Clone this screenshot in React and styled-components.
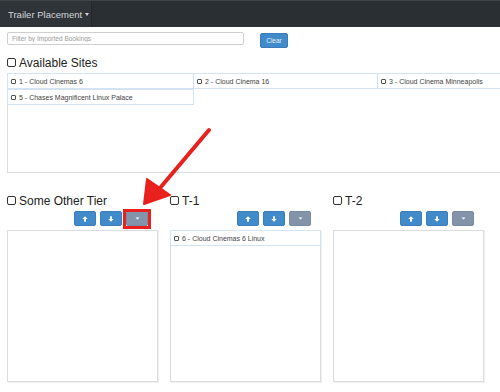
import React from 'react'
import styled, { createGlobalStyle } from 'styled-components'

const GlobalStyle = createGlobalStyle`
  html, body {
    margin: 0;
    padding: 0;
    background: #fff;
    overflow: hidden;
    font-family: "Liberation Sans", Arial, sans-serif;
    color: #333;
  }
`

const sites = [
  { id: 1, name: 'Cloud Cinemas 6' },
  { id: 2, name: 'Cloud Cinema 16' },
  { id: 3, name: 'Cloud Cinema Minneapolis' },
  { id: 5, name: 'Chases Magnificent Linux Palace' },
]

const tiers = [
  { name: 'Some Other Tier', items: [], marked: true },
  { name: 'T-1', items: [{ id: 6, name: 'Cloud Cinemas 6 Linux' }] },
  { name: 'T-2', items: [] },
]

const App = () => {
  return (
    <Page>
      <GlobalStyle />
      <Navbar>
        <NavItem>
          Trailer Placement <Caret />
        </NavItem>
      </Navbar>
      <Content>
        <FilterRow>
          <FilterInput placeholder="Filter by Imported Bookings" />
          <ClearButton>Clear</ClearButton>
        </FilterRow>
        <Heading>
          <Box size={9} />
          Available Sites
        </Heading>
        <SiteBox>
          {sites.map((s) => (
            <SiteCell key={s.id}>
              <Box size={5} />
              {s.id} - {s.name}
            </SiteCell>
          ))}
        </SiteBox>
        <Tiers>
          {tiers.map((t) => (
            <Tier key={t.name}>
              <Heading>
                <Box size={9} />
                {t.name}
              </Heading>
              <ButtonRow>
                <IconButton>
                  <svg width="6" height="6" viewBox="0 0 6 6">
                    <path d="M3 0.3 L5.7 3 L3.9 3 L3.9 5.8 L2.1 5.8 L2.1 3 L0.3 3 Z" fill="#fff" />
                  </svg>
                </IconButton>
                <IconButton>
                  <svg width="6" height="6" viewBox="0 0 6 6">
                    <path d="M3 5.7 L5.7 3 L3.9 3 L3.9 0.2 L2.1 0.2 L2.1 3 L0.3 3 Z" fill="#fff" />
                  </svg>
                </IconButton>
                <IconButton muted marked={t.marked}>
                  <svg width="5" height="3" viewBox="0 0 5 3">
                    <path d="M0.5 0.5 L4.5 0.5 L2.5 2.6 Z" fill="#fff" />
                  </svg>
                </IconButton>
              </ButtonRow>
              <TierBox>
                {t.items.map((i) => (
                  <SiteCell key={i.id} wide>
                    <Box size={5} />
                    {i.id} - {i.name}
                  </SiteCell>
                ))}
              </TierBox>
            </Tier>
          ))}
        </Tiers>
      </Content>
      <Arrow width="90" height="90" viewBox="0 0 90 90">
        <line x1="81" y1="4" x2="32" y2="62" stroke="#e8201e" strokeWidth="4" strokeLinecap="round" />
        <path d="M16 78 L19 53 L42 69 Z" fill="#e8201e" stroke="#e8201e" strokeWidth="2" strokeLinejoin="round" />
      </Arrow>
    </Page>
  )
}

const Page = styled.div`
  position: relative;
  width: 500px;
  height: 392px;
  overflow: hidden;
`

const Navbar = styled.div`
  height: 27px;
  background: #2a2f34;
  border-top: 1px solid #40454b;
  box-sizing: border-box;
  display: flex;
`

const NavItem = styled.div`
  display: flex;
  align-items: center;
  gap: 3px;
  padding: 0 0 0 8px;
  width: 92px;
  box-sizing: border-box;
  background: #2f3439;
  border-right: 1px solid #24282c;
  color: #d3d5d8;
  font-size: 9.5px;
  white-space: nowrap;
`

const Caret = styled.span`
  width: 0;
  height: 0;
  border-left: 2.5px solid transparent;
  border-right: 2.5px solid transparent;
  border-top: 3px solid #d3d5d8;
  margin-top: 1px;
`

const Content = styled.div`
  padding: 0 7px;
`

const FilterRow = styled.div`
  display: flex;
  align-items: flex-start;
  gap: 16px;
  margin-top: 5px;
  height: 16px;
`

const FilterInput = styled.input`
  width: 237px;
  height: 13px;
  box-sizing: border-box;
  border: 1px solid #cfcfcf;
  border-radius: 2px;
  padding: 0 4px;
  font-family: "Liberation Sans", Arial, sans-serif;
  font-size: 6.5px;
  outline: none;
  &::placeholder {
    color: #9a9a9a;
  }
`

const ClearButton = styled.button`
  margin-top: 1px;
  width: 28px;
  height: 15px;
  padding: 0;
  border: 1px solid #3b7cb8;
  border-radius: 2px;
  background: #428bca;
  color: #e8f0f8;
  font-family: "Liberation Sans", Arial, sans-serif;
  font-size: 6.5px;
`

const Heading = styled.div`
  display: flex;
  align-items: center;
  gap: 3px;
  height: 15px;
  font-size: 12px;
  color: #222;
  margin-top: 7px;
  white-space: nowrap;
`

const Box = styled.span`
  width: ${(p) => p.size}px;
  height: ${(p) => p.size}px;
  flex: none;
  box-sizing: border-box;
  border: 1px solid ${(p) => (p.size > 6 ? '#333' : '#555')};
  border-radius: ${(p) => (p.size > 6 ? 2 : 1)}px;
  background: #fff;
  margin-right: ${(p) => (p.size > 6 ? 0 : 1)}px;
`

const SiteBox = styled.div`
  margin-top: 3px;
  width: 580px;
  height: 100px;
  box-sizing: border-box;
  border: 1px solid #dedede;
  border-right: none;
  display: grid;
  grid-template-columns: 186px 184px 186px;
  grid-auto-rows: 16px;
  align-content: start;
`

const SiteCell = styled.div`
  height: 16px;
  box-sizing: border-box;
  border: 1px solid #d4e3f1;
  margin: -1px 0 0 -1px;
  display: flex;
  align-items: center;
  gap: 2px;
  padding-left: 3px;
  font-size: 7px;
  color: #444;
  white-space: nowrap;
  overflow: hidden;
  ${(p) => p.wide && 'margin: -1px -1px 0 -1px;'}
`

const Tiers = styled.div`
  display: flex;
  gap: 12px;
  margin-top: 13px;
`

const Tier = styled.div`
  width: 151px;
  display: flex;
  flex-direction: column;
`

const ButtonRow = styled.div`
  display: flex;
  justify-content: flex-end;
  gap: 4px;
  padding-right: 10px;
  margin-top: 3px;
  height: 15px;
`

const IconButton = styled.button`
  position: relative;
  width: 22px;
  height: 15px;
  padding: 0;
  border: 1px solid ${(p) => (p.muted ? '#7a8aa0' : '#3a7dba')};
  border-radius: 2px;
  background: ${(p) => (p.muted ? '#8393aa' : '#428bca')};
  display: flex;
  align-items: center;
  justify-content: center;
  ${(p) =>
    p.marked &&
    `
    &::after {
      content: "";
      position: absolute;
      left: -4px;
      top: -3px;
      right: -4px;
      bottom: -4px;
      border: 3px solid #e8201e;
    }
  `}
`

const TierBox = styled.div`
  margin-top: 4px;
  height: 152px;
  box-sizing: border-box;
  border: 1px solid #dcdcdc;
  box-shadow: 1px 1px 1px rgba(0, 0, 0, 0.06);
  display: flex;
  flex-direction: column;
`

const Arrow = styled.svg`
  position: absolute;
  left: 128px;
  top: 126px;
  overflow: visible;
`

export default App
